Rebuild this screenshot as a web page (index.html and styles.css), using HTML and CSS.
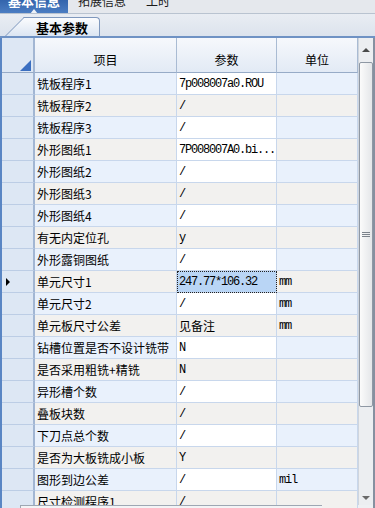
FILE: index.html
```html
<!DOCTYPE html>
<html lang="zh-CN">
<head>
  <meta charset="UTF-8">
  <meta name="viewport" content="width=device-width, initial-scale=1.0">
  <title>基本参数</title>
  <link rel="stylesheet" href="styles.css">
</head>
<body>
  <div class="topbar">
    <div class="toptab active">基本信息</div>
    <div class="toptab">拓展信息</div>
    <div class="toptab">工时</div>
  </div>
  <div class="strip">
    <div class="subtab">基本参数</div>
  </div>
  <div class="gridbox">
    <div class="grid">
      <div class="row head">
        <div class="cell rh corner"></div>
        <div class="cell">项目</div>
        <div class="cell">参数</div>
        <div class="cell">单位</div>
      </div>
      <div class="row odd"><div class="cell rh"></div><div class="cell name">铣板程序1</div><div class="cell val mono">7p008007a0.ROU</div><div class="cell unit"></div></div>
      <div class="row even"><div class="cell rh"></div><div class="cell name">铣板程序2</div><div class="cell val ro mono">/</div><div class="cell unit"></div></div>
      <div class="row odd"><div class="cell rh"></div><div class="cell name">铣板程序3</div><div class="cell val mono">/</div><div class="cell unit"></div></div>
      <div class="row even"><div class="cell rh"></div><div class="cell name">外形图纸1</div><div class="cell val mono">7P008007A0.bi...</div><div class="cell unit"></div></div>
      <div class="row odd"><div class="cell rh"></div><div class="cell name">外形图纸2</div><div class="cell val mono">/</div><div class="cell unit"></div></div>
      <div class="row even"><div class="cell rh"></div><div class="cell name">外形图纸3</div><div class="cell val ro mono">/</div><div class="cell unit"></div></div>
      <div class="row odd"><div class="cell rh"></div><div class="cell name">外形图纸4</div><div class="cell val mono">/</div><div class="cell unit"></div></div>
      <div class="row even"><div class="cell rh"></div><div class="cell name">有无内定位孔</div><div class="cell val ro mono">y</div><div class="cell unit"></div></div>
      <div class="row odd"><div class="cell rh"></div><div class="cell name">外形露铜图纸</div><div class="cell val mono">/</div><div class="cell unit"></div></div>
      <div class="row even"><div class="cell rh cur"></div><div class="cell name">单元尺寸1</div><div class="cell val sel mono">247.77*106.32</div><div class="cell unit mono">mm</div></div>
      <div class="row odd"><div class="cell rh"></div><div class="cell name">单元尺寸2</div><div class="cell val mono">/</div><div class="cell unit mono">mm</div></div>
      <div class="row even"><div class="cell rh"></div><div class="cell name">单元板尺寸公差</div><div class="cell val ro">见备注</div><div class="cell unit mono">mm</div></div>
      <div class="row odd"><div class="cell rh"></div><div class="cell name">钻槽位置是否不设计铣带</div><div class="cell val mono">N</div><div class="cell unit"></div></div>
      <div class="row even"><div class="cell rh"></div><div class="cell name">是否采用粗铣+精铣</div><div class="cell val ro mono">N</div><div class="cell unit"></div></div>
      <div class="row odd"><div class="cell rh"></div><div class="cell name">异形槽个数</div><div class="cell val mono">/</div><div class="cell unit"></div></div>
      <div class="row even"><div class="cell rh"></div><div class="cell name">叠板块数</div><div class="cell val ro mono">/</div><div class="cell unit"></div></div>
      <div class="row odd"><div class="cell rh"></div><div class="cell name">下刀点总个数</div><div class="cell val mono">/</div><div class="cell unit"></div></div>
      <div class="row even"><div class="cell rh"></div><div class="cell name">是否为大板铣成小板</div><div class="cell val ro mono">Y</div><div class="cell unit"></div></div>
      <div class="row odd"><div class="cell rh"></div><div class="cell name">图形到边公差</div><div class="cell val mono">/</div><div class="cell unit mono">mil</div></div>
      <div class="row even"><div class="cell rh"></div><div class="cell name">尺寸检测程序1</div><div class="cell val ro mono">/</div><div class="cell unit"></div></div>
    </div>
    <div class="vscroll">
      <div class="sb-btn up"></div>
      <div class="thumb"><span class="grip"></span></div>
      <div class="track"></div>
      <div class="sb-btn down"></div>
    </div>
  </div>
  <div class="hbar"></div>
</body>
</html>
```

FILE: styles.css
```css
* { margin:0; padding:0; box-sizing:border-box; }
body {
  width: 375px;
  height: 508px;
  overflow: hidden;
  position: relative;
  background: #dfe5ee;
  font-family: "Noto Sans CJK SC", "Liberation Sans", sans-serif;
  font-size: 12px;
  color: #000;
}

/* top tabs (cut off at the top edge) */
.topbar {
  height: 14px;
  display: flex;
  overflow: hidden;
  background: #e5e8ed;
  border-bottom: 1px solid #b9c3d0;
}
.toptab {
  margin-top: -5px;
  height: 19px;
  line-height: 12px;
  padding: 0 10px;
  color: #1a1a1a;
  position: relative;
}
.toptab.active {
  width: 68px;
  padding: 0;
  text-align: center;
  font-size: 13px;
  font-weight: bold;
  color: #fff;
  background: linear-gradient(#2a5ba4, #4d7fc4);
}
.toptab.active::after {
  content: '';
  position: absolute;
  left: 30px;
  bottom: 0;
  border-left: 4px solid transparent;
  border-right: 4px solid transparent;
  border-bottom: 5px solid #eef2f7;
}

/* sub tab strip */
.strip {
  height: 24px;
  padding-top: 3px;
  background: linear-gradient(#e9edf3, #dce3ed);
  border-bottom: 2px solid #6f92c4;
}
.subtab {
  position: relative;
  z-index: 0;
  margin-left: 25px;
  width: 75px;
  height: 19px;
  padding-left: 11px;
  line-height: 19px;
  font-size: 13px;
  font-weight: bold;
  border-top: 1px solid #7f98bd;
  border-right: 1px solid #7f98bd;
  border-top-right-radius: 4px;
  background: linear-gradient(#fbfcfe, #dbe5f2);
}
.subtab::before {
  content: '';
  position: absolute;
  z-index: -1;
  left: -20px;
  top: -1px;
  bottom: 0;
  width: 30px;
  transform-origin: bottom left;
  transform: skewX(-45deg);
  border-left: 1px solid #7f98bd;
  border-top: 1px solid #7f98bd;
  background: linear-gradient(#fbfcfe, #dbe5f2);
}

/* grid */
.gridbox {
  display: flex;
  height: 470px;
  overflow: hidden;
  border-left: 2px solid #5a86c4;
  border-right: 2px solid #8690a0;
  background: #eef0f3;
}
.grid { width: 356px; }
.row {
  display: grid;
  grid-template-columns: 33px 142px 100px 81px;
  height: 22px;
}
.cell {
  border-right: 1px solid #c8d7ec;
  border-bottom: 1px solid #c8d7ec;
  padding: 1px 0 0 2px;
  line-height: 20px;
  white-space: nowrap;
  overflow: hidden;
  position: relative;
}
.row.head { height: 35px; }
.row.head .cell {
  background: linear-gradient(#f6f8fc, #e2eaf5);
  border-right: 1px solid #a9bbd3;
  border-bottom: 1px solid #97abc7;
  text-align: center;
  padding: 8px 0 0;
  line-height: 27px;
}
.row.head .cell.corner { border-right: 2px solid #a2b6d3; }
.corner::after {
  content: '';
  position: absolute;
  right: 2px;
  bottom: 1px;
  border-left: 11px solid transparent;
  border-bottom: 11px solid #3b6fc1;
}
.cell.rh {
  background: #dde7f4;
  border-right: 2px solid #a2b6d3;
  border-bottom-color: #bccde5;
}
.cur::after {
  content: '';
  position: absolute;
  left: 4px;
  top: 7px;
  border-top: 4px solid transparent;
  border-bottom: 4px solid transparent;
  border-left: 4px solid #000;
}
.row.odd .cell { background-color: #e9f1fc; }
.row.even .cell { background-color: #f2f1ef; }
.row .cell.rh { background: #dde7f4; }
.row .cell.val { background: #fff; }
.row.even .cell.val.ro { background: #f2f1ef; }
.row .cell.val.sel {
  background: #b9d5f5;
  outline: 1px dotted #222;
  outline-offset: -1px;
}
.mono {
  font-family: "Liberation Mono", "DejaVu Sans Mono", monospace;
  letter-spacing: -1.2px;
}

/* vertical scrollbar */
.vscroll {
  width: 15px;
  height: 467px;
  display: flex;
  flex-direction: column;
  background: #eceef1;
  border-left: 1px solid #cfd5dd;
}
.sb-btn {
  height: 23px;
  display: flex;
  align-items: center;
  justify-content: center;
}
.sb-btn.down { height: 15px; }
.sb-btn.up::after {
  content: '';
  border-left: 4px solid transparent;
  border-right: 4px solid transparent;
  border-bottom: 4px solid #4a4a4a;
}
.sb-btn.down::after {
  content: '';
  border-left: 4px solid transparent;
  border-right: 4px solid transparent;
  border-top: 4px solid #6a6a6a;
}
.thumb {
  height: 345px;
  margin-top: 1px;
  border: 1px solid #8f98a4;
  border-radius: 2px;
  background: linear-gradient(to right, #fbfbfb, #e4e6e9);
  display: flex;
  align-items: center;
  justify-content: center;
}
.grip {
  width: 8px;
  height: 5px;
  border-top: 1px solid #7c838c;
  border-bottom: 1px solid #7c838c;
  background: linear-gradient(transparent 1px, #7c838c 1px, #7c838c 2px, transparent 2px);
}
.track { flex: 1; }

/* edge of the box below the grid */
.hbar {
  position: absolute;
  left: 20px;
  top: 505px;
  width: 302px;
  height: 4px;
  border-top: 1px solid #9ea7b3;
  border-left: 1px solid #9ea7b3;
  background: #f3f4f6;
}
```
